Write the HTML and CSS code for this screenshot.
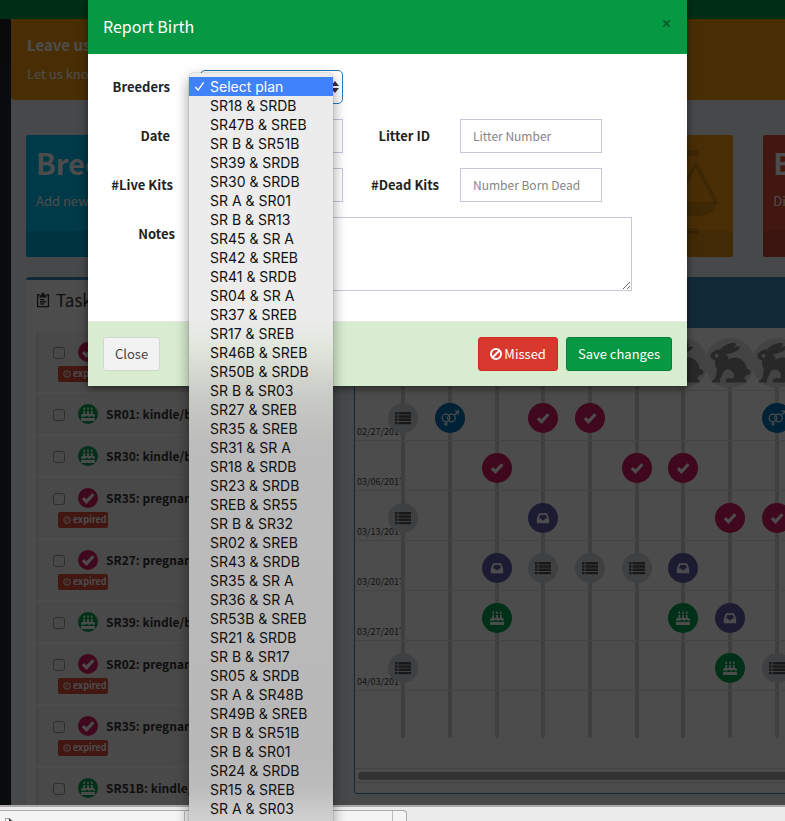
FILE: index.html
```html
<!DOCTYPE html>
<html lang="en">
<head>
<meta charset="utf-8">
<meta name="viewport" content="width=device-width, initial-scale=1">
<title>Report Birth</title>
<link rel="stylesheet" href="styles.css">
</head>
<body>
<svg class="sprite" aria-hidden="true">
  <symbol id="i-check" viewBox="0 0 16 16"><path d="M2.200 8.200l4 4 8-8.500" fill="none" stroke="currentColor" stroke-width="3.600"/></symbol>
  <symbol id="i-list" viewBox="0 0 16 16"><path d="M0 2h2.500v2.400H0zM3.500 2H16v2.400H3.500zM0 5.300h2.500v2.400H0zM3.500 5.300H16v2.400H3.500zM0 8.600h2.500V11H0zM3.500 8.600H16V11H3.500zM0 11.900h2.500v2.400H0zM3.500 11.900H16v2.400H3.500z" fill="currentColor"/></symbol>
  <symbol id="i-inbox" viewBox="0 0 16 16"><path fill="currentColor" fill-rule="evenodd" d="M3.500 2.500h9L15 8.500V14H1V8.500zM4.800 4.500L3.300 8.500h2.400l1 2h2.600l1-2h2.400l-1.500-4z"/></symbol>
  <symbol id="i-cake" viewBox="0 0 16 16"><path fill="currentColor" d="M2.700 4.500h2V8h2.300V4.500h2V8h2.300V4.500h2V8H14q2 0 2 2v.6q-1.300 1.600-2.700 0-1.300-1.300-2.600 0-1.400 1.400-2.700 0-1.300-1.400-2.700 0-1.300 1.300-2.600 0-1.400 1.600-2.700 0V10q0-2 2-2h.7zM0 12.300q1.400.9 2.700-.3 1.300 1.400 2.600 0 1.400 1.400 2.700 0 1.300 1.400 2.700 0 1.300 1.400 2.600 0 1.300 1.200 2.700.3V16H0zM3.700 0q2 2.500 0 3.700-2-1.200 0-3.700zM8 0q2 2.500 0 3.700Q6 2.500 8 0zm4.300 0q2 2.500 0 3.700-2-1.200 0-3.700z"/></symbol>
  <symbol id="i-pair" viewBox="0 0 18 16"><g fill="none" stroke="currentColor" stroke-width="1.200"><circle cx="5" cy="8" r="3.800"/><circle cx="10.500" cy="8" r="3.800"/><path d="M5 11.800V16M3 14h4M13.200 5.300L17 1.500M13.500 1H17.300v3.800"/></g></symbol>
  <symbol id="i-clock" viewBox="0 0 16 16"><circle cx="8" cy="8" r="6.500" fill="none" stroke="currentColor" stroke-width="2"/><path d="M8 4v5H5" fill="none" stroke="currentColor" stroke-width="1.600"/></symbol>
  <symbol id="i-rabbit" viewBox="0 0 46 44"><path fill="currentColor" d="M3 16.500Q1.500 13 5 10.500Q8 7.500 12.500 8Q16 3 24 1.300Q29 0 29.500 2.500Q28 6 20.500 8.500Q27 4.500 32 4.500Q34.500 5.500 32 8Q27 12 18.500 13Q21.500 14.500 21.500 18.500Q26 15.500 31 16.500Q39 19 40.500 28Q44.500 28.500 44.500 32Q43 36 40 34.500Q39 37 37 38.500Q41 39 40 42.500H19Q17 38.500 21 38H26.500Q28.500 33 24.500 30Q19 27 16.500 31L12.500 39.500Q14 42.500 11 42.500H4Q3.500 40 7 39Q9.500 33 9 28Q6.500 25 7.500 19Q4.500 19 3 16.500Z"/><circle cx="9" cy="14.500" r="2" fill="#e2e2e2"/></symbol>
</svg>

<div class="screen">
  <div class="app">
    <header class="navbar"></header>
    <div class="frame">
      <aside class="sidebar"></aside>
      <main class="content">
        <section class="alert">
          <h4>Leave us feedback</h4>
          <p>Let us know what you think</p>
        </section>

        <section class="tiles">
          <div class="tile tile-aqua"><h3>Breeders</h3><p>Add new breeder</p><span class="tile-foot"></span></div>
          <div class="tile tile-green"><span class="tile-foot"></span></div>
          <div class="tile tile-orange">
            <svg class="tile-art" viewBox="0 0 90 90" aria-hidden="true"><g fill="none" stroke="currentColor" stroke-width="4" stroke-linecap="round"><path d="M3 53L24 15l21 38M48 53L69 15l20 38"/></g><path fill="currentColor" d="M1 53h44q-3 14-22 14T1 53zM46 53h44q-2 14-22 14T46 53zM20 1h50q2 0 2 2v2q0 2-2 2H20zM20 79h50q2 0 2 2v2q0 2-2 2H20z"/></svg>
            <span class="tile-foot"></span>
          </div>
          <div class="tile tile-red"><h3>Butcher</h3><p>Directory</p><span class="tile-foot"></span></div>
        </section>

        <div class="columns">
          <section class="tasks">
            <h3 class="tasks-title">
              <svg viewBox="0 0 16 18" aria-hidden="true"><path d="M4 3H1.800v13.500h12.400V3H12M4.500 8.500h5M4.500 11h7M4.500 13.500h5" fill="none" stroke="currentColor" stroke-width="1.500"/><path d="M4 6V3.500h2q0-3 2-3t2 3h2V6z" fill="currentColor"/></svg>
              Tasks
            </h3>
            <ul class="task-list">
              <li class="tall"><label><input type="checkbox"><span class="dot maroon"><svg><use href="#i-check"/></svg></span>SR18: pregnancy check</label><span class="badge"><svg><use href="#i-clock"/></svg>expired</span></li>
              <li><label><input type="checkbox"><span class="dot green"><svg><use href="#i-cake"/></svg></span>SR01: kindle/birth</label></li>
              <li><label><input type="checkbox"><span class="dot green"><svg><use href="#i-cake"/></svg></span>SR30: kindle/birth</label></li>
              <li class="tall"><label><input type="checkbox"><span class="dot maroon"><svg><use href="#i-check"/></svg></span>SR35: pregnancy check</label><span class="badge"><svg><use href="#i-clock"/></svg>expired</span></li>
              <li class="tall"><label><input type="checkbox"><span class="dot maroon"><svg><use href="#i-check"/></svg></span>SR27: pregnancy check</label><span class="badge"><svg><use href="#i-clock"/></svg>expired</span></li>
              <li><label><input type="checkbox"><span class="dot green"><svg><use href="#i-cake"/></svg></span>SR39: kindle/birth</label></li>
              <li class="tall"><label><input type="checkbox"><span class="dot maroon"><svg><use href="#i-check"/></svg></span>SR02: pregnancy check</label><span class="badge"><svg><use href="#i-clock"/></svg>expired</span></li>
              <li class="tall"><label><input type="checkbox"><span class="dot maroon"><svg><use href="#i-check"/></svg></span>SR35: pregnancy check</label><span class="badge"><svg><use href="#i-clock"/></svg>expired</span></li>
              <li><label><input type="checkbox"><span class="dot green"><svg><use href="#i-cake"/></svg></span>SR51B: kindle/birth</label></li>
            </ul>
          </section>

          <section class="plan">
            <div class="plan-head"></div>
            <div class="board">
              <div class="lanes"><i></i><i></i><i></i><i></i><i></i><i></i><i></i><i></i><i></i><i></i><i></i><i></i></div>
              <div class="rows">
                <div class="row row-head">
                  <span class="pet c7"><svg><use href="#i-rabbit"/></svg></span>
                  <span class="pet c8"><svg><use href="#i-rabbit"/></svg></span>
                  <span class="pet c9"><svg><use href="#i-rabbit"/></svg></span>
                </div>
                <div class="row"><time>02/27/2017</time>
                  <span class="mark grey c1"><svg><use href="#i-list"/></svg></span>
                  <span class="mark blue c2"><svg><use href="#i-pair"/></svg></span>
                  <span class="mark maroon c4"><svg><use href="#i-check"/></svg></span>
                  <span class="mark maroon c5"><svg><use href="#i-check"/></svg></span>
                  <span class="mark blue c9"><svg><use href="#i-pair"/></svg></span>
                </div>
                <div class="row"><time>03/06/2017</time>
                  <span class="mark maroon c3"><svg><use href="#i-check"/></svg></span>
                  <span class="mark maroon c6"><svg><use href="#i-check"/></svg></span>
                  <span class="mark maroon c7"><svg><use href="#i-check"/></svg></span>
                </div>
                <div class="row"><time>03/13/2017</time>
                  <span class="mark grey c1"><svg><use href="#i-list"/></svg></span>
                  <span class="mark purple c4"><svg><use href="#i-inbox"/></svg></span>
                  <span class="mark maroon c8"><svg><use href="#i-check"/></svg></span>
                  <span class="mark maroon c9"><svg><use href="#i-check"/></svg></span>
                </div>
                <div class="row"><time>03/20/2017</time>
                  <span class="mark purple c3"><svg><use href="#i-inbox"/></svg></span>
                  <span class="mark grey c4"><svg><use href="#i-list"/></svg></span>
                  <span class="mark grey c5"><svg><use href="#i-list"/></svg></span>
                  <span class="mark grey c6"><svg><use href="#i-list"/></svg></span>
                  <span class="mark purple c7"><svg><use href="#i-inbox"/></svg></span>
                </div>
                <div class="row"><time>03/27/2017</time>
                  <span class="mark green c3"><svg><use href="#i-cake"/></svg></span>
                  <span class="mark green c7"><svg><use href="#i-cake"/></svg></span>
                  <span class="mark purple c8"><svg><use href="#i-inbox"/></svg></span>
                </div>
                <div class="row"><time>04/03/2017</time>
                  <span class="mark grey c1"><svg><use href="#i-list"/></svg></span>
                  <span class="mark green c8"><svg><use href="#i-cake"/></svg></span>
                  <span class="mark grey c9"><svg><use href="#i-list"/></svg></span>
                </div>
                <div class="row row-last"></div>
              </div>
            </div>
            <div class="scroller"><span></span></div>
          </section>
        </div>
      </main>
    </div>
  </div>

  <div class="overlay">
    <form class="modal">
      <header class="modal-head">
        <h1>Report Birth</h1>
        <button type="button" class="close" aria-label="Dismiss"><svg viewBox="0 0 10 10" aria-hidden="true"><path d="M1.500 1.500l7 7M8.500 1.500l-7 7" stroke="currentColor" stroke-width="2.200"/></svg></button>
      </header>
      <div class="modal-body">
        <div class="fields">
          <label for="breeders">Breeders</label>
          <div class="select">
            <select id="breeders"><option>Select plan</option></select>
            <svg class="select-arrows" viewBox="0 0 8 12" aria-hidden="true"><path d="M0 5l4-5 4 5zM0 7l4 5 4-5z" fill="#333"/></svg>
            <ul class="popup">
              <li class="picked"><svg viewBox="0 0 12 12" aria-hidden="true"><path d="M1.500 6.500L4.500 10l6-8.500" fill="none" stroke="#fff" stroke-width="1.500"/></svg>Select plan</li>
              <li>SR18 &amp; SRDB</li><li>SR47B &amp; SREB</li><li>SR B &amp; SR51B</li><li>SR39 &amp; SRDB</li><li>SR30 &amp; SRDB</li><li>SR A &amp; SR01</li><li>SR B &amp; SR13</li><li>SR45 &amp; SR A</li><li>SR42 &amp; SREB</li><li>SR41 &amp; SRDB</li><li>SR04 &amp; SR A</li><li>SR37 &amp; SREB</li><li>SR17 &amp; SREB</li><li>SR46B &amp; SREB</li><li>SR50B &amp; SRDB</li><li>SR B &amp; SR03</li><li>SR27 &amp; SREB</li><li>SR35 &amp; SREB</li><li>SR31 &amp; SR A</li><li>SR18 &amp; SRDB</li><li>SR23 &amp; SRDB</li><li>SREB &amp; SR55</li><li>SR B &amp; SR32</li><li>SR02 &amp; SREB</li><li>SR43 &amp; SRDB</li><li>SR35 &amp; SR A</li><li>SR36 &amp; SR A</li><li>SR53B &amp; SREB</li><li>SR21 &amp; SRDB</li><li>SR B &amp; SR17</li><li>SR05 &amp; SRDB</li><li>SR A &amp; SR48B</li><li>SR49B &amp; SREB</li><li>SR B &amp; SR51B</li><li>SR B &amp; SR01</li><li>SR24 &amp; SRDB</li><li>SR15 &amp; SREB</li><li>SR A &amp; SR03</li>
            </ul>
          </div>
        </div>
        <div class="fields">
          <label for="date">Date</label>
          <input id="date" type="text">
          <label for="litter">Litter ID</label>
          <input id="litter" type="text" placeholder="Litter Number">
        </div>
        <div class="fields fields-kits">
          <label for="live">#Live Kits</label>
          <input id="live" type="text">
          <label for="dead">#Dead Kits</label>
          <input id="dead" type="text" placeholder="Number Born Dead">
        </div>
        <div class="fields fields-notes">
          <label for="notes">Notes</label>
          <textarea id="notes"></textarea>
        </div>
      </div>
      <footer class="modal-foot">
        <button type="button" class="btn btn-plain">Close</button>
        <button type="button" class="btn btn-red"><svg viewBox="0 0 12 12" aria-hidden="true"><g fill="none" stroke="currentColor" stroke-width="2"><circle cx="6" cy="6" r="5"/><path d="M9.500 2.500l-7 7"/></g></svg>Missed</button>
        <button type="submit" class="btn btn-green">Save changes</button>
      </footer>
    </form>
  </div>

  <div class="shelf">
    <div class="shelf-item shelf-file"><svg viewBox="0 0 10 12" aria-hidden="true"><path d="M.5 12V.5h5.500L9.500 4v8" fill="#fff" stroke="#777"/><path d="M5 0l5 5H5z" fill="#333"/></svg></div>
    <div class="shelf-item shelf-more"></div>
  </div>
</div>
</body>
</html>
```
FILE: styles.css
```css
* { box-sizing: border-box; }

body {
  margin: 0;
  font: 13px/20px "Noto Sans CJK SC", "Noto Sans", sans-serif;
  color: #333;
}

h1, h3, h4, p, ul { margin: 0; padding: 0; }
ul { list-style: none; }
input, select, textarea, button { font: inherit; }
.sprite { position: absolute; width: 0; height: 0; }

.screen {
  position: relative;
  display: flex;
  flex-direction: column;
  height: 100vh;
  overflow: hidden;
}

/* Dashboard behind the dialog */
.app {
  flex: 1;
  min-height: 0;
  display: flex;
  flex-direction: column;
  overflow: hidden;
  background: #ecf0f5;
}
.navbar { flex: none; height: 19px; background: #009a44; }
.frame { display: flex; flex: 1; min-height: 0; }
.sidebar {
  flex: none;
  width: 11px;
  background: linear-gradient(#222 43px, #1e282c 43px);
}
.content { flex: none; width: 983px; }

.alert {
  height: 81px;
  padding: 16px;
  border-radius: 3px;
  background: #f39c12;
  color: #fff;
}
.alert h4 { font-size: 15px; line-height: 20px; }
.alert p { margin-top: 9px; }

.tiles {
  display: grid;
  grid-template-columns: repeat(4, 1fr);
  gap: 30px;
  margin: 35px 15px 20px;
}
.tile {
  position: relative;
  display: flex;
  flex-direction: column;
  height: 122px;
  padding: 8px 10px 0;
  border-radius: 2px;
  color: #fff;
  overflow: hidden;
}
.tile h3 { font-size: 29px; line-height: 38px; }
.tile p { margin-top: 10px; }
.tile-foot { height: 26px; margin: auto -10px 0; background: rgba(0, 0, 0, .1); }
.tile-art { position: absolute; top: 14px; right: 16px; width: 90px; color: rgba(0, 0, 0, .15); }
.tile-aqua { background: #00c0ef; }
.tile-green { background: #00a65a; }
.tile-orange { background: #f39c12; }
.tile-red { background: #dd4b39; }

.columns {
  display: grid;
  grid-template-columns: 298px 1fr;
  gap: 30px;
  align-items: start;
  margin: 0 15px;
}

.tasks {
  padding: 0 10px;
  border-top: 3px solid #3c8dbc;
  border-radius: 3px;
  background: #fff;
}
.tasks-title {
  display: flex;
  align-items: center;
  gap: 6px;
  height: 52px;
  padding-bottom: 12px;
  font-size: 17px;
  font-weight: 400;
}
.tasks-title svg { width: 14px; height: 16px; }
.task-list { display: grid; gap: 2px; }
.task-list li {
  height: 40px;
  padding: 10px 0 0 15px;
  border-left: 2px solid #e6e7e8;
  border-radius: 2px;
  background: #f4f4f4;
}
.task-list .tall { height: 60px; }
.task-list label {
  display: flex;
  align-items: center;
  height: 20px;
  font-size: 12px;
  font-weight: 700;
  white-space: nowrap;
}
.task-list input {
  appearance: none;
  width: 12px;
  height: 12px;
  margin: 2px 13px 0 0;
  border: 1px solid #999;
  border-radius: 3px;
}
.dot {
  display: grid;
  place-items: center;
  width: 20px;
  height: 20px;
  margin-right: 8px;
  border-radius: 50%;
  color: #fff;
}
.dot svg { width: 14px; height: 14px; }
.badge {
  display: flex;
  align-items: center;
  gap: 2px;
  width: 50px;
  height: 16px;
  margin: 4px 0 0 5px;
  padding-left: 5px;
  border-radius: 2px;
  background: #dd4b39;
  color: #fff;
  font-size: 9px;
  line-height: 14px;
  font-weight: 700;
}
.badge svg { width: 8px; height: 8px; }

.maroon { background: #d81b60; }
.green { background: #00a650; }
.blue { background: #0073b7; }
.purple { background: #605ca8; }
.grey { background: #d2d6de; }

.plan {
  border: 1px solid #3c8dbc;
  border-radius: 3px;
  background: #fff;
}
.plan-head { height: 50px; background: #3c8dbc; }
.board { display: grid; padding: 10px 0 30px; }
.lanes, .rows { grid-area: 1 / 1; }
.lanes {
  display: grid;
  grid-template-columns: repeat(12, 1fr);
  justify-items: center;
  padding: 40px 38px 0 25px;
}
.lanes i { width: 4px; border-radius: 0 0 2px 2px; background: #d2d2d2; }
.row {
  display: grid;
  grid-template-columns: 25px repeat(12, 1fr) 38px;
  height: 50px;
  border-top: 1px solid #e4e4e4;
}
.row-head { height: 52px; border: 0; }
.row-last { height: 48px; }
.row time {
  grid-area: 1 / 1;
  align-self: end;
  width: 44px;
  height: 14px;
  margin-left: 2px;
  overflow: hidden;
  color: #444;
  font-size: 9px;
  line-height: 12px;
}
.mark, .pet {
  grid-row: 1;
  display: grid;
  place-items: center;
  justify-self: center;
  border-radius: 50%;
}
.mark { width: 30px; height: 30px; margin-top: 12px; color: #fff; }
.mark svg { width: 14px; height: 14px; }
.mark.grey { color: #555; }
.mark.grey svg { width: 16px; height: 16px; }
.mark.blue svg { width: 18px; height: 16px; }
.pet { width: 50px; height: 50px; margin: 0 -2px; background: #e2e2e2; color: #888; }
.pet svg { width: 44px; height: 44px; }
.c1 { grid-column: 2; }
.c2 { grid-column: 3; }
.c3 { grid-column: 4; }
.c4 { grid-column: 5; }
.c5 { grid-column: 6; }
.c6 { grid-column: 7; }
.c7 { grid-column: 8; }
.c8 { grid-column: 9; }
.c9 { grid-column: 10; }

.scroller {
  margin-bottom: 10px;
  padding: 3px 3px 2px;
  border: solid #dcdcdc;
  border-width: 1px 0;
}
.scroller span { display: block; height: 8px; border-radius: 4px; background: #aaa; }

/* Dialog */
.overlay {
  position: absolute;
  inset: 0 0 16px;
  z-index: 2;
  padding-right: 10px;
  background: rgba(0, 0, 0, .7);
}
.modal {
  max-width: 599px;
  margin: 0 auto;
  background: #fff;
  box-shadow: 0 2px 8px rgba(0, 0, 0, .5);
}
.modal-head {
  display: flex;
  justify-content: space-between;
  height: 54px;
  padding: 14px 15px 0;
  background: #069843;
  color: #fff;
}
.modal-head h1 { font-size: 16px; font-weight: 400; line-height: 24px; }
.close {
  display: grid;
  place-items: center;
  width: 11px;
  height: 18px;
  padding: 0;
  border: 0;
  background: none;
  color: #05602b;
}
.close svg { width: 9px; height: 9px; }

.modal-body {
  display: grid;
  gap: 15px;
  padding: 16px 15px 30px;
}
.fields {
  display: grid;
  grid-template-columns: 97px 143px 117px 142px;
}
.fields > label {
  padding: 7px 30px 0 0;
  color: #222;
  font-weight: 700;
  text-align: right;
  white-space: nowrap;
}
.fields-kits > label { padding-right: 27px; }
.fields-kits > label:nth-of-type(2) { padding-right: 21px; }
.fields-notes { grid-template-columns: 97px 432px; }
.fields-notes > label { padding-right: 25px; }

.fields input, .fields select, .fields textarea {
  display: block;
  width: 100%;
  height: 34px;
  margin: 0;
  padding: 5px 12px 7px;
  border: 1px solid #c5c8d8;
  border-radius: 0;
  outline: 0;
  background: #fff;
  color: #444;
  font-size: 12px;
}
.fields textarea { height: 74px; }
.fields ::placeholder { color: #858585; }
.select { position: relative; }
.fields select { appearance: none; border-color: #2a7ab8; border-radius: 5px; }
.select-arrows { position: absolute; top: 11px; right: 4px; width: 8px; height: 12px; }

.popup {
  position: absolute;
  top: 3px;
  left: -11px;
  width: 144px;
  padding: 4px 0 12px;
  border-radius: 5px 5px 0 0;
  background: linear-gradient(#ececec 245px, #e0e6dc 275px, #c8cac5 325px, #bdbcbc 370px, #b8b8b8 680px, #bdbcbc 715px, #d2d2d2 750px);
  box-shadow: 0 0 1px rgba(0, 0, 0, .6), 0 5px 14px rgba(0, 0, 0, .4);
  color: #111;
  font: 14px/19px Inter, sans-serif;
  white-space: nowrap;
}
.popup li { height: 19px; padding-left: 21px; }
.popup .picked { display: flex; align-items: center; gap: 5px; padding-left: 5px; background: #3f82fb; color: #fff; }
.picked svg { width: 11px; height: 11px; }

.modal-foot {
  display: flex;
  gap: 8px;
  padding: 15px;
  border-top: 1px solid #e5e5e5;
  background: #d8edcf;
}
.btn {
  display: flex;
  align-items: center;
  gap: 2px;
  height: 34px;
  padding: 0 11px;
  border: 1px solid;
  border-radius: 3px;
  color: #fff;
  white-space: nowrap;
}
.btn svg { width: 12px; height: 12px; }
.btn-plain { margin-right: auto; border-color: #d5d5d5; background: #f2f2f2; color: #444; }
.btn-red { border-color: #d02a20; background: #d8382e; }
.btn-green { border-color: #088038; background: #069843; }

/* Browser download shelf */
.shelf {
  flex: none;
  display: flex;
  height: 16px;
  padding-top: 3px;
  border-top: 2px solid #a8a8a8;
  background: #ebebeb;
}
.shelf-item { border-top: 1px solid #aaa; background: #f4f4f4; }
.shelf-file { width: 185px; padding: 7px 5px 0; border-right: 1px solid #bbb; }
.shelf-file svg { display: block; width: 8px; height: 10px; }
.shelf-more {
  width: 222px;
  border-right: 1px solid #aaa;
  border-radius: 0 4px 0 0;
  background: linear-gradient(90deg, #f4f4f4 207px, #bbb 207px, #bbb 208px, #f4f4f4 208px);
}
```
